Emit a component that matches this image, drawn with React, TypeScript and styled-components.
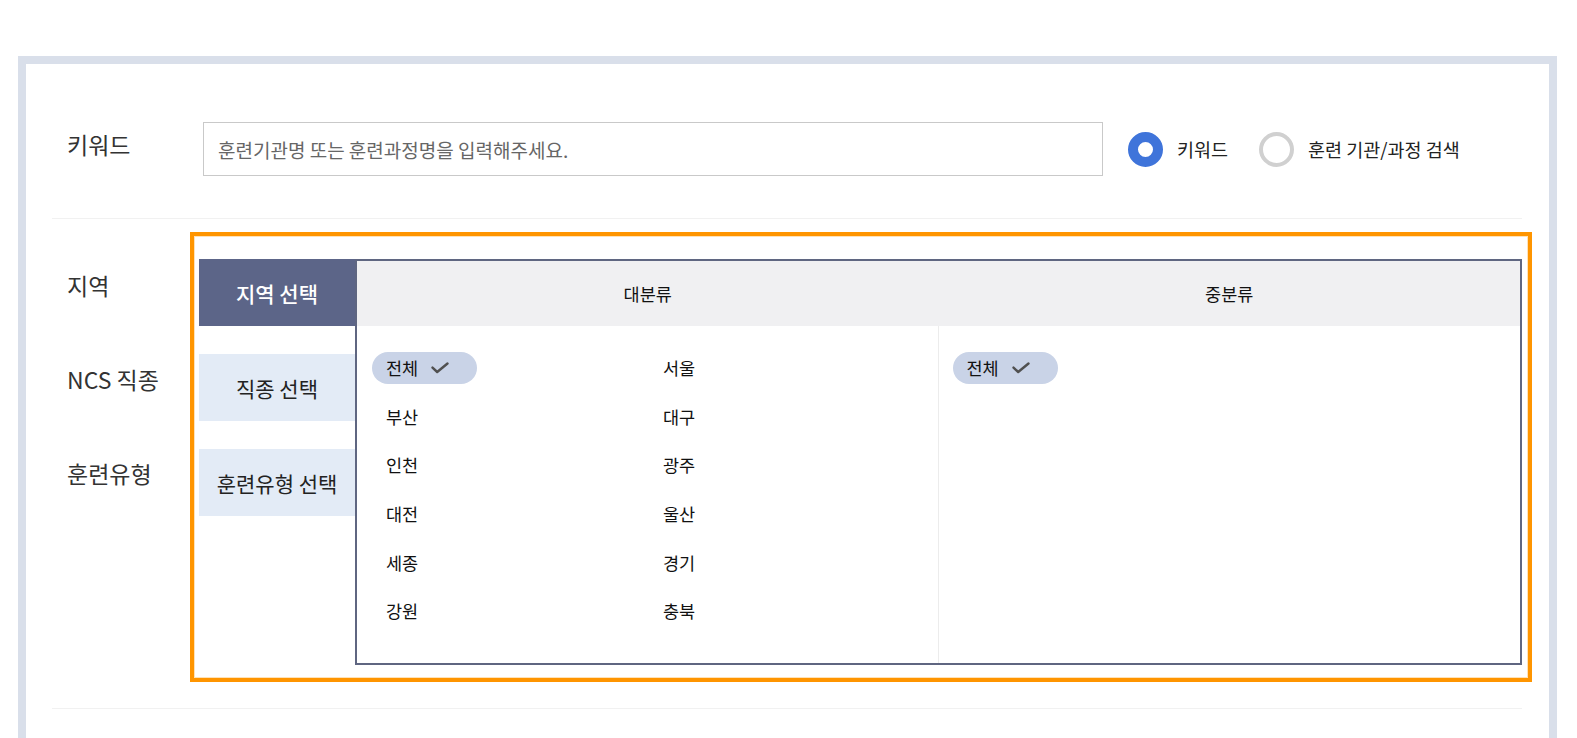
import React from "react";
import styled, { createGlobalStyle } from "styled-components";

const GlobalStyle = createGlobalStyle`
  html, body { margin: 0; padding: 0; background: #fff; overflow: hidden; }
  body { font-family: "Noto Sans CJK KR", "Noto Sans", sans-serif; color: #222; }
  * { box-sizing: border-box; }
`;

const Page = styled.div`
  padding: 56px 20px 0 18px;
  height: 738px;
  overflow: hidden;
`;

const Frame = styled.div`
  border: 8px solid #d9dfea;
  border-bottom: none;
  height: 682px;
  padding: 0 27px 0 26px;
  background: #fff;
`;

const KeywordRow = styled.div`
  display: flex;
  align-items: center;
  padding: 58px 0 42px;
  border-bottom: 1px solid #f1f1f1;
`;

const RowLabel = styled.div`
  width: 151px;
  padding-left: 15px;
  font-size: 23px;
  line-height: 32px;
  color: #333;
  align-self: flex-start;
  margin-top: 6px;
  flex-shrink: 0;
`;

const SearchInput = styled.input`
  width: 900px;
  height: 54px;
  border: 1px solid #c9c9c9;
  padding: 0 14px;
  font-family: inherit;
  font-size: 19px;
  color: #333;
  outline: none;
  &::placeholder { color: #666; }
`;

const RadioGroup = styled.div`
  display: flex;
  align-items: center;
  gap: 31px;
  margin-left: 25px;
`;

const RadioItem = styled.label`
  display: flex;
  align-items: center;
  gap: 14px;
  font-size: 18.5px;
  color: #222;
  cursor: pointer;
`;

const RadioCircle = styled.span<{ $checked?: boolean }>`
  width: 35px;
  height: 35px;
  border-radius: 50%;
  background: #fff;
  border: ${(p) => (p.$checked ? "10px solid #3f74da" : "4px solid #d0d0d0")};
  flex-shrink: 0;
`;

const FilterSection = styled.div`
  display: flex;
  padding: 13px 0 26px;
  border-bottom: 1px solid #f1f1f1;
`;

const SideLabels = styled.div`
  width: 138px;
  flex-shrink: 0;
  display: flex;
  flex-direction: column;
  gap: 62px;
  padding: 37px 0 0 15px;
`;

const SideLabel = styled.div`
  font-size: 23px;
  line-height: 32px;
  color: #333;
  white-space: nowrap;
`;

const Highlight = styled.div`
  flex: 1;
  margin-right: -10px;
  border: 4px solid #ff9500;
  box-shadow: inset 0 0 0 1px #ffe2b8;
  padding: 23px 6px 13px 5px;
  display: flex;
`;

const Tabs = styled.div`
  width: 156px;
  flex-shrink: 0;
  display: flex;
  flex-direction: column;
  gap: 28px;
`;

const Tab = styled.div<{ $active?: boolean }>`
  height: 67px;
  display: flex;
  align-items: center;
  justify-content: center;
  font-size: 21px;
  font-weight: ${(p) => (p.$active ? 500 : 400)};
  color: ${(p) => (p.$active ? "#fff" : "#222")};
  background: ${(p) => (p.$active ? "#5c6588" : "#e3ebf6")};
`;

const Panel = styled.div`
  flex: 1;
  border: 2px solid #5f6681;
  display: flex;
  flex-direction: column;
  height: 406px;
`;

const PanelHeader = styled.div`
  display: grid;
  grid-template-columns: 1fr 1fr;
  height: 65px;
  background: #f0f0f2;
`;

const HeaderCell = styled.div`
  display: flex;
  align-items: center;
  justify-content: center;
  font-size: 17.5px;
  color: #111;
`;

const PanelBody = styled.div`
  flex: 1;
  display: grid;
  grid-template-columns: 1fr 1fr;
`;

const Column = styled.div<{ $divider?: boolean }>`
  padding: 26px 0 0 ${(p) => (p.$divider ? "15px" : "14px")};
  border-right: ${(p) => (p.$divider ? "1px solid #ececec" : "none")};
`;

const ItemGrid = styled.div<{ $cols: number }>`
  display: grid;
  grid-template-columns: repeat(${(p) => p.$cols}, 277px);
  row-gap: 16.6px;
  align-content: start;
`;

const Item = styled.div<{ $selected?: boolean }>`
  justify-self: start;
  height: 32px;
  display: inline-flex;
  align-items: center;
  gap: 13px;
  padding: 0 ${(p) => (p.$selected ? "28px" : "14px")} 0 14px;
  border-radius: 16px;
  font-size: 17.5px;
  line-height: 1;
  color: #111;
  background: ${(p) => (p.$selected ? "#c9d3e7" : "transparent")};
  cursor: pointer;
`;

const Check = () => (
  <svg width="18" height="12" viewBox="0 0 18 12" fill="none">
    <path d="M1.5 5.6 L6.2 10 L16.5 1.5" stroke="#505050" strokeWidth="2.4" strokeLinecap="round" strokeLinejoin="round" />
  </svg>
);

const regions = [
  "전체", "서울",
  "부산", "대구",
  "인천", "광주",
  "대전", "울산",
  "세종", "경기",
  "강원", "충북",
];

export default function App() {
  return (
    <>
      <GlobalStyle />
      <Page>
        <Frame>
          <KeywordRow>
            <RowLabel>키워드</RowLabel>
            <SearchInput placeholder="훈련기관명 또는 훈련과정명을 입력해주세요." />
            <RadioGroup>
              <RadioItem>
                <RadioCircle $checked />
                키워드
              </RadioItem>
              <RadioItem>
                <RadioCircle />
                훈련 기관/과정 검색
              </RadioItem>
            </RadioGroup>
          </KeywordRow>
          <FilterSection>
            <SideLabels>
              <SideLabel>지역</SideLabel>
              <SideLabel>NCS 직종</SideLabel>
              <SideLabel>훈련유형</SideLabel>
            </SideLabels>
            <Highlight>
              <Tabs>
                <Tab $active>지역 선택</Tab>
                <Tab>직종 선택</Tab>
                <Tab>훈련유형 선택</Tab>
              </Tabs>
              <Panel>
                <PanelHeader>
                  <HeaderCell>대분류</HeaderCell>
                  <HeaderCell>중분류</HeaderCell>
                </PanelHeader>
                <PanelBody>
                  <Column $divider>
                    <ItemGrid $cols={2}>
                      {regions.map((r, i) => (
                        <Item key={r} $selected={i === 0}>
                          {r}
                          {i === 0 && <Check />}
                        </Item>
                      ))}
                    </ItemGrid>
                  </Column>
                  <Column>
                    <ItemGrid $cols={1}>
                      <Item $selected>
                        전체
                        <Check />
                      </Item>
                    </ItemGrid>
                  </Column>
                </PanelBody>
              </Panel>
            </Highlight>
          </FilterSection>
        </Frame>
      </Page>
    </>
  );
}
